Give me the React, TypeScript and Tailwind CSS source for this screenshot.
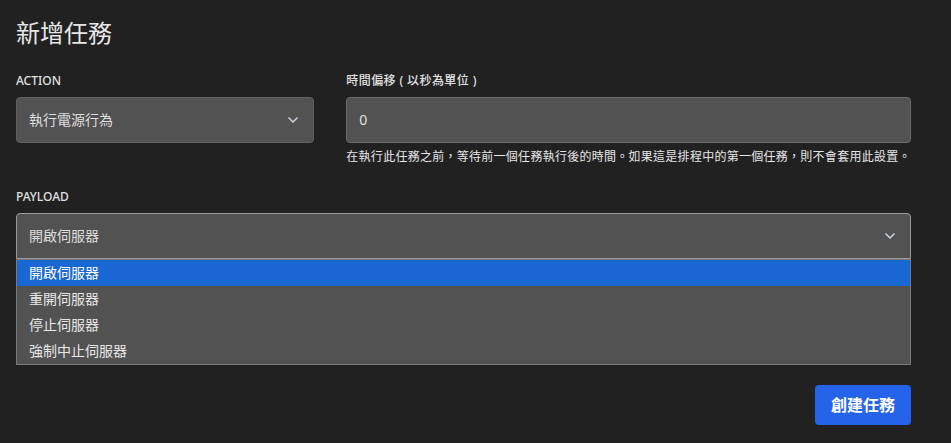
import { ChevronDown } from 'lucide-react';

const options = ['開啟伺服器', '重開伺服器', '停止伺服器', '強制中止伺服器'];

export default function App() {
  return (
    <div
      className="min-h-screen w-full bg-[#212121] text-[#e4e4e4] pl-4 pr-10 pt-4"
      style={{ fontFamily: '"Noto Sans", "Noto Sans CJK TC", sans-serif' }}
    >
      <h1 className="text-2xl leading-8 font-normal text-[#e6e6e6] mb-6 pt-px">新增任務</h1>

      <div className="flex">
        <div className="w-1/3">
          <label className="block text-xs leading-4 font-medium text-[#e0e0e0] mb-2">ACTION</label>
          <div className="h-[46px] rounded bg-[#525252] border border-[#606060] flex items-center justify-between pl-3 pr-3 text-sm text-[#dedede]">
            <span>執行電源行為</span>
            <ChevronDown size={16} strokeWidth={2.5} className="text-[#c7d0dc]" />
          </div>
        </div>
        <div className="w-2/3 pl-8">
          <label className="block text-xs leading-4 font-medium text-[#e0e0e0] mb-2 tracking-[0.4px]">時間偏移 ( 以秒為單位 )</label>
          <div className="h-[46px] rounded bg-[#525252] border border-[#6a6a6a] flex items-center pl-3 text-sm text-[#e0e0e0]">
            0
          </div>
          <p className="mt-1.5 text-xs leading-4 text-[#e6e6e6] whitespace-nowrap tracking-[0.27px]">
            在執行此任務之前，等待前一個任務執行後的時間。如果這是排程中的第一個任務，則不會套用此設置。
          </p>
        </div>
      </div>

      <div className="mt-6">
        <label className="block text-xs leading-4 font-medium text-[#e0e0e0] mb-2">PAYLOAD</label>
        <div className="h-[46px] rounded-t bg-[#525252] border border-[#9a9a9a] flex items-center justify-between pl-3 pr-3 text-sm text-[#dedede]">
          <span>開啟伺服器</span>
          <ChevronDown size={16} strokeWidth={2.5} className="text-[#c7d0dc]" />
        </div>
        <ul className="bg-[#525252] border border-[#7a7a7a] text-sm text-[#e8e8e8]">
          {options.map((o, i) => (
            <li
              key={o}
              className={`h-[26px] flex items-center pl-3 ${i === 0 ? 'bg-[#1967d2] text-white' : ''}`}
            >
              {o}
            </li>
          ))}
        </ul>
      </div>

      <div className="flex justify-end mt-5">
        <button className="h-10 px-4 rounded bg-[#2563eb] text-white text-base font-semibold">創建任務</button>
      </div>
    </div>
  );
}
